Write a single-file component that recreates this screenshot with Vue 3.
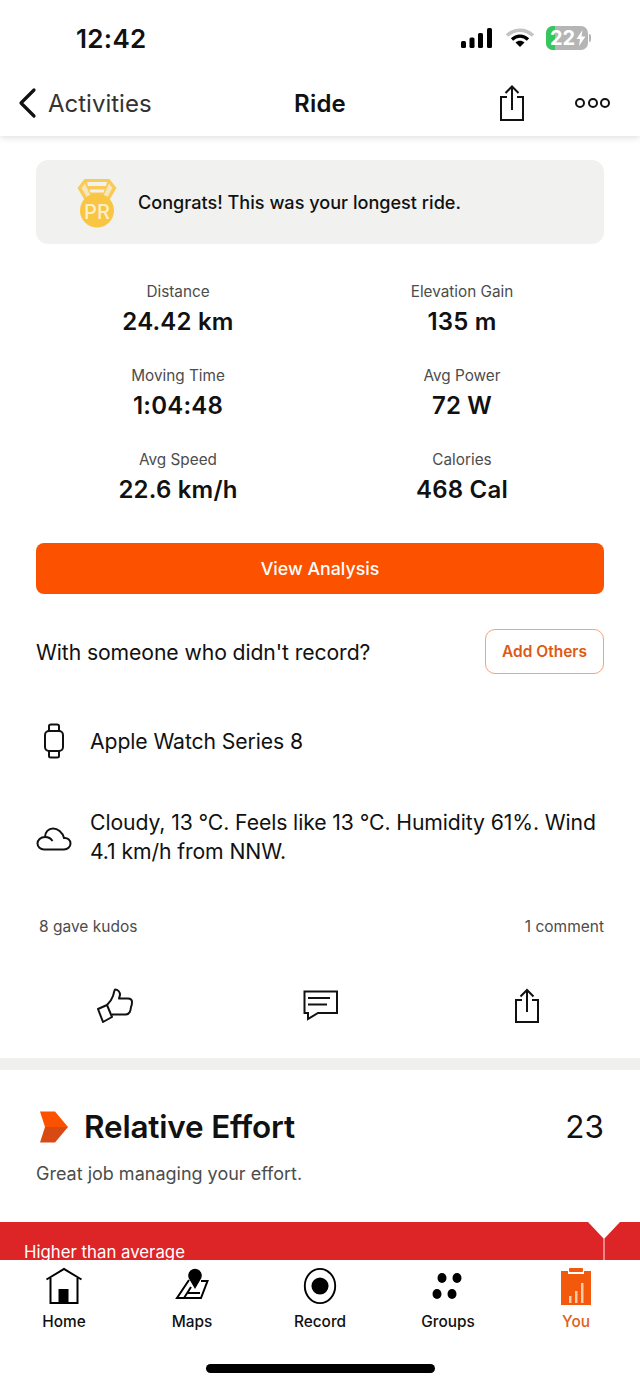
<script setup>
const stats = [
  { label: 'Distance', value: '24.42 km' },
  { label: 'Elevation Gain', value: '135 m' },
  { label: 'Moving Time', value: '1:04:48' },
  { label: 'Avg Power', value: '72 W' },
  { label: 'Avg Speed', value: '22.6 km/h' },
  { label: 'Calories', value: '468 Cal' },
]
</script>

<template>
  <div class="phone">
    <header class="top">
      <div class="status">
        <span class="time">12:42</span>
        <div class="status-icons">
          <svg width="34" height="22" viewBox="0 0 34 22" fill="#000">
            <rect x="1" y="14" width="5" height="7" rx="1.5" />
            <rect x="9.5" y="10.5" width="5" height="10.5" rx="1.5" />
            <rect x="18" y="6" width="5" height="15" rx="1.5" />
            <rect x="27" y="1" width="5" height="20" rx="1.5" />
          </svg>
          <svg width="30" height="22" viewBox="0 0 30 22" fill="none">
            <path d="M2 8.5C9.500 1.500 20.500 1.500 28 8.5" stroke="#c4c4c4" stroke-width="3.6" />
            <path d="M7 12.500C11.500 8 18.500 8 23 12.500" stroke="#000" stroke-width="3.2" />
            <path d="M10.500 15.500C13 13 17 13 19.500 15.500L15 20Z" fill="#000" />
          </svg>
          <div class="battery">
            <div class="battery-body">
              <span class="battery-fill"></span>
              <span class="battery-text">22</span>
              <svg class="bolt" width="10" height="16" viewBox="0 0 10 16"><path d="M6.500 0L0.500 9H4L3 16L9.500 6.500H5.500Z" fill="#fff" /></svg>
            </div>
            <span class="battery-cap"></span>
          </div>
        </div>
      </div>
      <nav class="nav">
        <div class="back">
          <svg width="22" height="32" viewBox="0 0 22 32" fill="none"><path d="M17 3L4 16L17 29" stroke="#111" stroke-width="3.200" stroke-linecap="round" stroke-linejoin="round" /></svg>
          <span>Activities</span>
        </div>
        <span class="nav-title">Ride</span>
        <div class="nav-actions">
          <svg width="26" height="38" viewBox="0 0 26 38" fill="none" stroke="#111" stroke-width="2">
            <path d="M8 13H2V36H24V13H18" />
            <path d="M13 26V3M6.500 9L13 2.500L19.500 9" />
          </svg>
          <div class="dots"><i></i><i></i><i></i></div>
        </div>
      </nav>
    </header>

    <main class="content">
      <section class="summary">
        <div class="banner">
          <svg class="medal" width="40" height="50" viewBox="0 0 40 50">
            <path d="M7.500 1H32.500L39.500 10L30 26H10L0.500 10Z" fill="#f9cb55" />
            <path d="M10 4H30L29 8H11Z" fill="#f1f1ef" />
            <path d="M12.500 11.500H27.500L26.500 14.500H13.500Z" fill="#f1f1ef" />
            <path d="M4.500 10L8 5.500L15 21L12 23Z" fill="#f5e6bf" />
            <path d="M35.500 10L32 5.500L25 21L28 23Z" fill="#f5e6bf" />
            <circle cx="20" cy="32.500" r="17" fill="#f9c542" />
            <text x="20" y="40.500" text-anchor="middle" class="pr">PR</text>
          </svg>
          <span>Congrats! This was your longest ride.</span>
        </div>

        <div class="stats">
          <div v-for="s in stats" :key="s.label" class="stat">
            <div class="stat-label">{{ s.label }}</div>
            <div class="stat-value">{{ s.value }}</div>
          </div>
        </div>

        <button class="analysis">View Analysis</button>

        <div class="others">
          <span>With someone who didn't record?</span>
          <button class="add">Add Others</button>
        </div>

        <div class="device">
          <span class="row-icon">
            <svg width="22" height="36" viewBox="0 0 22 36" fill="none" stroke="#111" stroke-width="2">
              <rect x="2" y="8" width="18" height="20" rx="4" />
              <path d="M6 8V3C6 2 7 1.500 8 1.500H14C15 1.500 16 2 16 3V8" />
              <path d="M6 28V33C6 34 7 34.500 8 34.500H14C15 34.500 16 34 16 33V28" />
            </svg>
          </span>
          <span>Apple Watch Series 8</span>
        </div>

        <div class="weather">
          <span class="row-icon">
            <svg width="36" height="24" viewBox="0 0 36 24" fill="none" stroke="#111" stroke-width="2">
              <path d="M8 22.500H28C31.500 22.500 34.500 20 34.500 16.500C34.500 13 31.500 10.500 28 11C26.500 5 21.500 1.500 17 1.500C12.500 1.500 9 5 9 10C4.500 10 1.500 13 1.500 16.500C1.500 20 4.500 22.500 8 22.500Z" />
              <path d="M9 10C12 10 15 11.500 16.500 14" />
            </svg>
          </span>
          <span class="weather-text">Cloudy, 13 °C. Feels like 13 °C. Humidity 61%. Wind 4.1 km/h from NNW.</span>
        </div>

        <div class="social">
          <span class="kudos">8 gave kudos</span>
          <span>1 comment</span>
        </div>

        <div class="actions">
          <svg width="36" height="36" viewBox="0 0 36 36" fill="none" stroke="#111" stroke-width="2" stroke-linejoin="round">
            <path d="M10 17C13 14 15 11 16 8C17 5 17 3 18 1.500C21 1.500 23 4 23 7L22 10.500H31C34 10.500 35 12 35 14C35 16 34.500 18 34 19C33.500 23 33 26 29 26.500H15" />
            <path d="M1 21L10 17L15 29L6 34Z" />
          </svg>
          <svg class="act-comment" width="36" height="32" viewBox="0 0 36 32" fill="none" stroke="#111" stroke-width="2">
            <path d="M1.500 1.500H34V23H15L5 29V23H1.500Z" />
            <path d="M5 8H27M5 14.500H24" />
          </svg>
          <svg class="act-share" width="26" height="36" viewBox="0 0 26 36" fill="none" stroke="#111" stroke-width="2">
            <path d="M8 12H2V34H24V12H18" />
            <path d="M13 24V2.500M6.500 8.500L13 2L19.500 8.500" />
          </svg>
        </div>
      </section>

      <section class="effort">
        <div class="effort-head">
          <div class="effort-title">
            <svg width="30" height="32" viewBox="0 0 30 32">
              <path d="M1 0.500H16L29 16H6Z" fill="#fc5200" />
              <path d="M6 16H29L16 31.500H1Z" fill="#d84a14" />
            </svg>
            <h2>Relative Effort</h2>
          </div>
          <span class="effort-score">23</span>
        </div>
        <p class="effort-note">Great job managing your effort.</p>
        <div class="band">
          <span>Higher than average</span>
          <svg class="marker" width="32" height="38" viewBox="0 0 32 38">
            <path d="M0 0H32L16 17Z" fill="#fff" />
            <path d="M16 16V38" stroke="#f2a9ac" stroke-width="1.500" />
          </svg>
        </div>
      </section>
    </main>

    <footer class="tabs">
      <div class="tab-row">
        <div class="tab">
          <svg width="38" height="38" viewBox="0 0 38 38" fill="none" stroke="#000" stroke-width="2">
            <path d="M1.500 12.500L19 2L36.500 12.500" />
            <path d="M5.500 11V36H32.500V11" />
            <rect x="13.500" y="22" width="10" height="14" fill="#000" stroke="none" />
          </svg>
          <span>Home</span>
        </div>
        <div class="tab">
          <svg width="36" height="38" viewBox="0 0 36 38" fill="none" stroke="#000" stroke-width="2">
            <path d="M15 13L3 31H27L33.500 14H27" />
            <path d="M10 31L17 20" />
            <path d="M14 26H26" />
            <path d="M21 22L15.500 12.500A6.800 6.800 0 1 1 26.500 12.500Z" fill="#000" stroke="none" />
          </svg>
          <span>Maps</span>
        </div>
        <div class="tab">
          <svg width="36" height="40" viewBox="0 0 36 40" fill="none">
            <ellipse cx="18" cy="20" rx="16" ry="18" stroke="#000" stroke-width="2" />
            <circle cx="18" cy="20" r="9" fill="#000" />
          </svg>
          <span>Record</span>
        </div>
        <div class="tab">
          <svg width="36" height="38" viewBox="0 0 36 38" fill="#000">
            <ellipse cx="12" cy="11" rx="4.500" ry="5" />
            <ellipse cx="27" cy="11" rx="4.500" ry="5" />
            <ellipse cx="7" cy="27" rx="4.500" ry="5" />
            <ellipse cx="22" cy="27" rx="4.500" ry="5" />
          </svg>
          <span>Groups</span>
        </div>
        <div class="tab active">
          <svg width="30" height="38" viewBox="0 0 30 38">
            <path d="M0 4H7V7H23V4H30V38H0Z" fill="#f2590c" />
            <rect x="8" y="1" width="14" height="4" rx="1" fill="#f2590c" />
            <rect x="8" y="29" width="2.500" height="7" fill="#f9c9a8" />
            <rect x="14" y="24" width="2.500" height="12" fill="#f9c9a8" />
            <rect x="20" y="16" width="2.500" height="20" fill="#f9c9a8" />
          </svg>
          <span>You</span>
        </div>
      </div>
      <div class="home-bar"></div>
    </footer>
  </div>
</template>

<style>
html, body { margin: 0; background: #fff; }
</style>

<style scoped>
* { box-sizing: border-box; }
.phone {
  width: 640px; height: 1384px; overflow: hidden;
  display: flex; flex-direction: column;
  background: #fff; color: #111;
  font-family: Inter, "Liberation Sans", sans-serif;
}
.top {
  flex: none; background: #fff; height: 136px;
  box-shadow: 0 2px 6px rgba(0,0,0,.12);
  position: relative; z-index: 2;
}
.status {
  height: 72px; display: flex; justify-content: space-between; align-items: center;
  padding: 4px 49px 0 76px;
}
.time { font-size: 26px; font-weight: 600; letter-spacing: .3px; }
.status-icons { display: flex; align-items: center; gap: 11px; }
.battery { display: flex; align-items: center; gap: 1px; }
.battery-body {
  position: relative; width: 42px; height: 24px; border-radius: 7px;
  background: #b5b5b5; overflow: hidden;
  display: flex; align-items: center; padding-left: 4px;
}
.battery-fill { position: absolute; left: 0; top: 0; bottom: 0; width: 9px; background: #36c75c; }
.battery-text { position: relative; color: #fff; font-size: 20px; font-weight: 700; line-height: 1; }
.bolt { position: relative; margin-left: 1px; }
.battery-cap { width: 2px; height: 8px; border-radius: 0 2px 2px 0; background: #b5b5b5; }
.nav {
  height: 62px; display: grid; grid-template-columns: 1fr auto 1fr; align-items: center;
  padding: 0 21px;
}
.back { display: flex; align-items: center; gap: 9px; margin-left: -4px; font-size: 24px; color: #333; }
.nav-title { font-size: 24px; font-weight: 600; letter-spacing: .2px; }
.nav-actions { display: flex; justify-content: flex-end; align-items: center; gap: 50px; margin-right: 9px; }
.dots { display: flex; gap: 2.500px; }
.dots i { width: 10px; height: 10px; border: 2px solid #111; border-radius: 50%; }
.content { flex: 1; min-height: 0; overflow: hidden; }
.summary { padding: 24px 36px 0; }
.banner {
  height: 84px; background: #f1f1ef; border-radius: 12px;
  display: flex; align-items: center; gap: 21px; padding: 0 41px;
  font-size: 18.100px; font-weight: 500;
}
.medal { flex: none; margin-top: 2px; }
.pr { font: 500 20px Inter, sans-serif; fill: #fdf0c8; }
.stats {
  display: grid; grid-template-columns: 284px 284px; row-gap: 24px;
  margin-top: 36px; text-align: center;
}
.stat-label { font-size: 15.300px; line-height: 24px; color: #4c4c4c; }
.stat-value { font-size: 24px; line-height: 36px; font-weight: 600; letter-spacing: .2px; }
.analysis {
  display: block; width: 100%; height: 51px; margin-top: 35px; border: 0; border-radius: 8px;
  background: #fc5200; color: #fff; font: 500 17.800px Inter, sans-serif;
}
.others {
  display: flex; justify-content: space-between; align-items: center;
  margin-top: 35px; font-size: 21.200px; letter-spacing: -.1px;
}
.add {
  width: 119px; height: 45px; border: 1.500px solid #eba67f; border-radius: 10px;
  background: #fff; color: #dd5a14; font: 600 15.500px Inter, sans-serif;
}
.device { display: flex; align-items: center; margin-top: 49px; height: 36px; font-size: 21.200px; letter-spacing: -.1px; }
.row-icon { flex: none; width: 54px; display: flex; justify-content: center; padding-right: 18px; }
.weather { display: flex; align-items: center; margin-top: 49px; font-size: 21.200px; line-height: 29px; letter-spacing: -.1px; }
.weather .row-icon { margin-top: 4px; }
.weather-text { flex: 1; margin-right: -4px; }
.social {
  display: flex; justify-content: space-between; margin-top: 51px;
  font-size: 15.500px; line-height: 20px; color: #4c4c4c;
}
.kudos { margin-left: 3px; }
.actions {
  display: flex; align-items: center;
  margin-top: 49px; padding-left: 61px; height: 40px;
}
.act-comment { margin-left: 170px; }
.act-share { margin-left: 175px; }
.effort { border-top: 12px solid #f0f0ee; margin-top: 32px; }
.effort-head {
  display: flex; justify-content: space-between; align-items: center;
  padding: 38px 36px 0 39px;
}
.effort-title { display: flex; align-items: center; gap: 15px; }
h2 { margin: 0; font-size: 31.500px; line-height: 38px; font-weight: 600; letter-spacing: -.2px; }
.effort-score { font-size: 31.500px; line-height: 38px; }
.effort-note { margin: 15px 0 0 36px; font-size: 18px; line-height: 26px; color: #4c4c4c; }
.band {
  position: relative; height: 40px; margin-top: 35px; background: #dd2528;
  color: #fff; font-size: 16.800px; padding: 20px 0 0 24px; line-height: 20px; overflow: hidden;
}
.marker { position: absolute; right: 20px; top: 0; }
.tabs { flex: none; height: 124px; background: #fff; position: relative; z-index: 1; }
.tab-row { display: grid; grid-template-columns: repeat(5, 128px); }
.tab {
  display: flex; flex-direction: column; align-items: center;
  padding-top: 7px; font-size: 15.400px; font-weight: 500; color: #111; height: 80px;
}
.tab svg { height: 38px; flex: none; margin-bottom: 7px; }
.tab.active { color: #e2601a; }
.home-bar {
  width: 229px; height: 9px; border-radius: 5px; background: #000;
  margin: 24px auto 0;
}
</style>
